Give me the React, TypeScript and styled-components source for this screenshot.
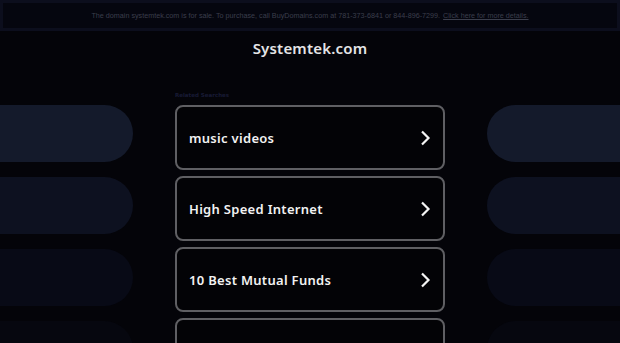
import React, { FC } from 'react';
import styled, { createGlobalStyle } from 'styled-components';

const GlobalStyle = createGlobalStyle`
  html, body {
    margin: 0;
    padding: 0;
    background: #040409;
    overflow: hidden;
  }
  body {
    font-family: 'Noto Sans', 'DejaVu Sans', sans-serif;
  }
`;

const Page = styled.div`
  width: 620px;
  height: 343px;
  overflow: hidden;
  display: flex;
  flex-direction: column;
  background: #040409;
  & > * {
    flex-shrink: 0;
  }
`;

const Banner = styled.div`
  height: 25px;
  border: 3px solid #0c0e1d;
  background: #05060f;
  display: flex;
  align-items: center;
  justify-content: center;
  font-family: 'Liberation Sans', Arial, sans-serif;
  font-size: 7.2px;
  color: #3b3e4c;
  white-space: nowrap;
  a {
    color: #3b3e4c;
    text-decoration: underline;
    margin-left: 3px;
  }
`;

const Title = styled.h1`
  margin: 6px 0 0;
  height: 22px;
  line-height: 22px;
  text-align: center;
  font-family: 'Noto Sans', sans-serif;
  font-size: 15px;
  font-weight: 600;
  letter-spacing: 0.2px;
  color: #e4e4e6;
`;

const Main = styled.div`
  margin-top: 30px;
  display: grid;
  grid-template-columns: 133px 42px 270px 42px 133px;
  align-items: start;
`;

const PillColumn = styled.div<{ side: 'left' | 'right' }>`
  grid-column: ${p => (p.side === 'left' ? 1 : 5)};
  padding-top: 16px;
  display: flex;
  flex-direction: column;
  gap: 15px;
`;

const Pill = styled.div<{ side: 'left' | 'right'; shade: string }>`
  height: 57px;
  background: ${p => p.shade};
  border-radius: ${p => (p.side === 'left' ? '0 29px 29px 0' : '29px 0 0 29px')};
`;

const Center = styled.div`
  grid-column: 3;
  display: flex;
  flex-direction: column;
`;

const Label = styled.div`
  height: 12px;
  line-height: 12px;
  margin-bottom: 4px;
  font-family: 'DejaVu Sans', sans-serif;
  font-size: 5.5px;
  font-weight: 700;
  color: #181b35;
`;

const Cards = styled.div`
  display: flex;
  flex-direction: column;
  gap: 6px;
`;

const Card = styled.a`
  box-sizing: border-box;
  height: 65px;
  border: 2px solid #5f5f63;
  border-radius: 8px;
  background: #030306;
  display: flex;
  align-items: center;
  justify-content: space-between;
  padding: 0 12px 0 12px;
  color: #f2f2f2;
  text-decoration: none;
  font-family: 'Noto Sans', sans-serif;
  font-size: 13px;
  font-weight: 600;
  letter-spacing: 0.3px;
`;

const Chevron: FC = () => (
  <svg width="12" height="16" viewBox="0 0 12 16">
    <path d="M3 1.5 L9.5 8 L3 14.5" fill="none" stroke="#f5f5f5" strokeWidth="2.2" />
  </svg>
);

const searches = ['music videos', 'High Speed Internet', '10 Best Mutual Funds', 'Top Rated Antivirus'];
const shades = ['#141a2b', '#0d1120', '#080a16', '#06070f'];

const App: FC = () => (
  <Page>
    <GlobalStyle />
    <Banner>
      The domain systemtek.com is for sale. To purchase, call BuyDomains.com at 781-373-6841 or 844-896-7299.
      <a href="#">Click here for more details.</a>
    </Banner>
    <Title>Systemtek.com</Title>
    <Main>
      <PillColumn side="left">
        {shades.map(s => (
          <Pill key={s} side="left" shade={s} />
        ))}
      </PillColumn>
      <Center>
        <Label>Related Searches</Label>
        <Cards>
          {searches.map(s => (
            <Card key={s} href="#">
              <span>{s}</span>
              <Chevron />
            </Card>
          ))}
        </Cards>
      </Center>
      <PillColumn side="right">
        {shades.map(s => (
          <Pill key={s} side="right" shade={s} />
        ))}
      </PillColumn>
    </Main>
  </Page>
);

export default App;
